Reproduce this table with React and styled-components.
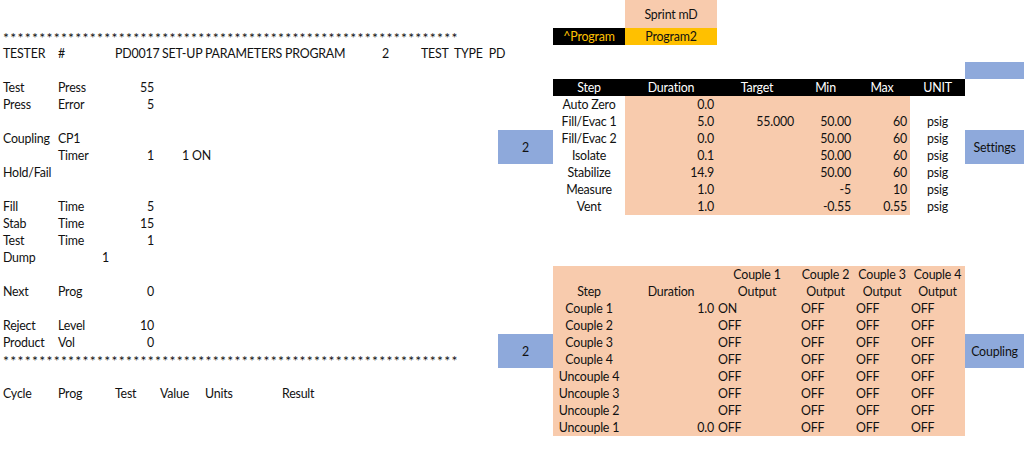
import styled, { createGlobalStyle } from 'styled-components';

const GlobalStyle = createGlobalStyle`
    body {
        margin: 0;
        background: #ffffff;
        font-family: Lato, "Liberation Sans", sans-serif;
        color: #111111;
    }
`;

const PEACH = '#f8cbad';
const GOLD = '#ffc000';
const BLUE = '#8ea9db';

const Sheet = styled.div`
    display: grid;
    grid-template-columns: 55px 57px 45px 45px 77px 72px 41px 26px 80px 55px 72px 92px 80px 57px 56px 55px 59px;
    grid-template-rows: 28px repeat(24, 17px);
    width: 1024px;
    height: 452px;
    font-size: 12.4px;
    letter-spacing: -0.2px;
`;

const Band = styled.div`
    grid-column: ${p => p.$col} / span ${p => p.$span || 1};
    grid-row: ${p => p.$row} / span ${p => p.$rows || 1};
    background: ${p => p.$bg};
`;

const Cell = styled.div`
    grid-column: ${p => p.$col} / span ${p => p.$span || 1};
    grid-row: ${p => p.$row} / span ${p => p.$rows || 1};
    display: flex;
    align-items: center;
    justify-content: ${p => p.$align === 'right' ? 'flex-end' : p.$align === 'center' ? 'center' : 'flex-start'};
    padding: 0 3px 0 ${p => p.$indent || 3}px;
    white-space: pre;
    color: ${p => p.$color || '#111111'};
    background: ${p => p.$bg || 'transparent'};
    line-height: 17px;
`;

const StarRule = styled.div`
    grid-column: 1 / span 9;
    grid-row: ${p => p.$row};
    display: flex;
    justify-content: space-between;
    align-items: flex-start;
    width: 455px;
    padding: 3px 0 0 3px;
    font-size: 14px;
    line-height: 14px;
`;

const Stars = ({ row }) => (
    <StarRule $row={row}>
        {Array.from({ length: 63 }, (_, i) => <span key={i}>*</span>)}
    </StarRule>
);

// left side report text: [row, col, text, align, indent]
const report = [
    [3, 1, 'TESTER'], [3, 2, '#'], [3, 3, 'PD0017'], [3, 4, 'SET-UP', 'left', 5], [3, 5, 'PARAMETERS', 'left', 3],
    [3, 6, 'PROGRAM', 'left', 6], [3, 7, '2', 'right'], [3, 9, 'TEST  TYPE  PD'],
    [5, 1, 'Test'], [5, 2, 'Press'], [5, 3, '55', 'right'],
    [6, 1, 'Press'], [6, 2, 'Error'], [6, 3, '5', 'right'],
    [8, 1, 'Coupling'], [8, 2, 'CP1'],
    [9, 2, 'Timer'], [9, 3, '1', 'right'], [9, 4, '1 ON', 'left', 25],
    [10, 1, 'Hold/Fail'],
    [12, 1, 'Fill'], [12, 2, 'Time'], [12, 3, '5', 'right'],
    [13, 1, 'Stab'], [13, 2, 'Time'], [13, 3, '15', 'right'],
    [14, 1, 'Test'], [14, 2, 'Time'], [14, 3, '1', 'right'],
    [15, 1, 'Dump'], [15, 2, '1', 'right'],
    [17, 1, 'Next'], [17, 2, 'Prog'], [17, 3, '0', 'right'],
    [19, 1, 'Reject'], [19, 2, 'Level'], [19, 3, '10', 'right'],
    [20, 1, 'Product'], [20, 2, 'Vol'], [20, 3, '0', 'right'],
    [23, 1, 'Cycle'], [23, 2, 'Prog'], [23, 3, 'Test'], [23, 4, 'Value'], [23, 5, 'Units'], [23, 6, 'Result'],
];

const steps = [
    ['Auto Zero', '0.0', '', '', '', ''],
    ['Fill/Evac 1', '5.0', '55.000', '50.00', '60', 'psig'],
    ['Fill/Evac 2', '0.0', '', '50.00', '60', 'psig'],
    ['Isolate', '0.1', '', '50.00', '60', 'psig'],
    ['Stabilize', '14.9', '', '50.00', '60', 'psig'],
    ['Measure', '1.0', '', '-5', '10', 'psig'],
    ['Vent', '1.0', '', '-0.55', '0.55', 'psig'],
];

const couplings = [
    ['Couple 1', '1.0', 'ON'],
    ['Couple 2', '', 'OFF'],
    ['Couple 3', '', 'OFF'],
    ['Couple 4', '', 'OFF'],
    ['Uncouple 4', '', 'OFF'],
    ['Uncouple 3', '', 'OFF'],
    ['Uncouple 2', '', 'OFF'],
    ['Uncouple 1', '0.0', 'OFF'],
];

const App = () => {
    return (
        <>
            <GlobalStyle />
            <Sheet>
                {/* colour fills first, text on top */}
                <Band $col={12} $row={1} $bg={PEACH} />
                <Band $col={11} $row={2} $bg="#000" />
                <Band $col={12} $row={2} $bg={GOLD} />
                <Band $col={17} $row={4} $bg={BLUE} />
                <Band $col={11} $span={6} $row={5} $bg="#000" />
                <Band $col={12} $span={4} $row={6} $rows={7} $bg={PEACH} />
                <Band $col={11} $span={6} $row={16} $rows={10} $bg={PEACH} />

                <Stars row={2} />
                <Stars row={21} />
                {report.map(([row, col, text, align, indent], i) => (
                    <Cell key={i} $row={row} $col={col} $align={align} $indent={indent}>{text}</Cell>
                ))}

                <Cell $col={12} $row={1} $align="center">Sprint mD</Cell>
                <Cell $col={11} $row={2} $align="center" $color={GOLD}>^Program</Cell>
                <Cell $col={12} $row={2} $align="center">Program2</Cell>

                {['Step', 'Duration', 'Target', 'Min', 'Max', 'UNIT'].map((h, i) => (
                    <Cell key={h} $col={11 + i} $row={5} $align="center" $color="#fff">{h}</Cell>
                ))}
                {steps.map((s, i) => (
                    <>
                        <Cell key={s[0]} $col={11} $row={6 + i} $align="center">{s[0]}</Cell>
                        <Cell $col={12} $row={6 + i} $align="right">{s[1]}</Cell>
                        <Cell $col={13} $row={6 + i} $align="right">{s[2]}</Cell>
                        <Cell $col={14} $row={6 + i} $align="right">{s[3]}</Cell>
                        <Cell $col={15} $row={6 + i} $align="right">{s[4]}</Cell>
                        <Cell $col={16} $row={6 + i} $align="center">{s[5]}</Cell>
                    </>
                ))}
                <Cell $col={10} $row={8} $rows={2} $align="center" $bg={BLUE}>2</Cell>
                <Cell $col={17} $row={8} $rows={2} $align="center" $bg={BLUE}>Settings</Cell>

                {[1, 2, 3, 4].map(n => (
                    <Cell key={'c' + n} $col={12 + n} $row={16} $align="center">{`Couple ${n}`}</Cell>
                ))}
                <Cell $col={11} $row={17} $align="center">Step</Cell>
                <Cell $col={12} $row={17} $align="center">Duration</Cell>
                {[1, 2, 3, 4].map(n => (
                    <Cell key={'o' + n} $col={12 + n} $row={17} $align="center">Output</Cell>
                ))}
                {couplings.map((c, i) => (
                    <>
                        <Cell key={c[0]} $col={11} $row={18 + i} $align="center">{c[0]}</Cell>
                        <Cell $col={12} $row={18 + i} $align="right">{c[1]}</Cell>
                        <Cell $col={13} $row={18 + i} $indent={1}>{c[2]}</Cell>
                        <Cell $col={14} $row={18 + i} $indent={4}>OFF</Cell>
                        <Cell $col={15} $row={18 + i} $indent={2}>OFF</Cell>
                        <Cell $col={16} $row={18 + i} $indent={1}>OFF</Cell>
                    </>
                ))}
                <Cell $col={10} $row={20} $rows={2} $align="center" $bg={BLUE}>2</Cell>
                <Cell $col={17} $row={20} $rows={2} $align="center" $bg={BLUE}>Coupling</Cell>
            </Sheet>
        </>
    );
};

export default App;
